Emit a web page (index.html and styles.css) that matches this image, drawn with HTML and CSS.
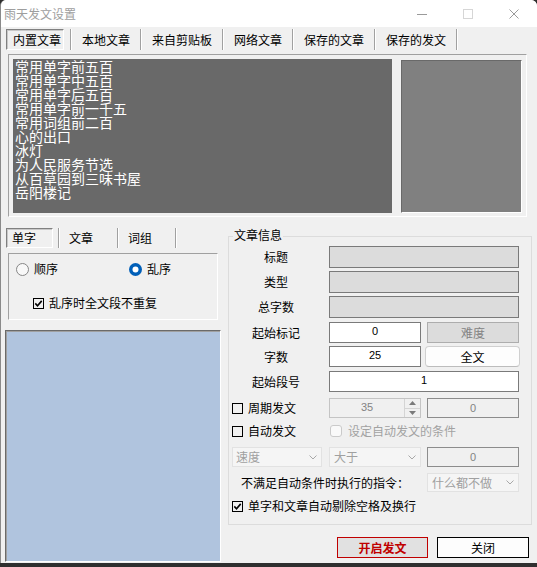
FILE: index.html
```html
<!DOCTYPE html>
<html lang="zh-CN">
<head>
<meta charset="utf-8">
<title>雨天发文设置</title>
<link rel="stylesheet" href="styles.css">
</head>
<body>
<div class="window">
  <div class="titlebar">
    <span class="title">雨天发文设置</span>
    <div class="caption-btns">
      <span class="cb"><svg width="10" height="10" viewBox="0 0 10 10"><path d="M0 5.5h10" stroke="#9a9a9a" stroke-width="1"/></svg></span>
      <span class="cb"><svg width="10" height="10" viewBox="0 0 10 10"><rect x="0.5" y="0.5" width="9" height="9" fill="none" stroke="#d6d6d6"/></svg></span>
      <span class="cb"><svg width="10" height="10" viewBox="0 0 10 10"><path d="M0.5 0.5l9 9M9.5 0.5l-9 9" stroke="#9a9a9a" stroke-width="1"/></svg></span>
    </div>
  </div>

  <div class="tabs">
    <span class="tab-sel">内置文章</span>
    <span class="sep"></span>
    <span class="tab">本地文章</span>
    <span class="sep"></span>
    <span class="tab">来自剪贴板</span>
    <span class="sep"></span>
    <span class="tab">网络文章</span>
    <span class="sep"></span>
    <span class="tab">保存的文章</span>
    <span class="sep"></span>
    <span class="tab">保存的发文</span>
    <span class="sep"></span>
  </div>

  <div class="toppanel">
    <div class="list">
      <div>常用单字前五百</div>
      <div>常用单字中五百</div>
      <div>常用单字后五百</div>
      <div>常用单字前一千五</div>
      <div>常用词组前二百</div>
      <div>心的出口</div>
      <div>冰灯</div>
      <div>为人民服务节选</div>
      <div>从百草园到三味书屋</div>
      <div>岳阳楼记</div>
    </div>
    <div class="preview"></div>
  </div>

  <div class="lower">
    <div class="leftcol">
      <div class="tabs2">
        <span class="tab2-sel">单字</span>
        <span class="sep"></span>
        <span class="tab2">文章</span>
        <span class="sep"></span>
        <span class="tab2 w56">词组</span>
        <span class="sep"></span>
      </div>
      <div class="radiogroup">
        <div class="rrow">
          <span class="radio r-first">
            <svg width="13" height="13" viewBox="0 0 13 13"><circle cx="6.5" cy="6.5" r="6" fill="#f8f8f8" stroke="#868686"/></svg>
            <span>顺序</span>
          </span>
          <span class="radio r-second">
            <svg width="13" height="13" viewBox="0 0 13 13"><circle cx="6.5" cy="6.5" r="6.5" fill="#005fb8"/><circle cx="6.5" cy="6.5" r="3" fill="#fff"/></svg>
            <span>乱序</span>
          </span>
        </div>
        <div class="crow">
          <span class="chk">
            <svg width="11" height="11" viewBox="0 0 11 11"><rect x="0.5" y="0.5" width="10" height="10" fill="none" stroke="#000"/><path d="M2.3 5.4l2.2 2.3 4.2-4.8" fill="none" stroke="#000" stroke-width="1.6"/></svg>
            <span>乱序时全文段不重复</span>
          </span>
        </div>
      </div>
      <div class="bluebox"></div>
    </div>

    <div class="rightcol">
      <div class="group">
        <div class="gcap">文章信息</div>
        <div class="row r1"><span class="lbl">标题</span><span class="field ro wide"></span></div>
        <div class="row r2"><span class="lbl">类型</span><span class="field ro wide"></span></div>
        <div class="row r3"><span class="lbl">总字数</span><span class="field ro wide"></span></div>
        <div class="row r4"><span class="lbl">起始标记</span><span class="field edit half">0</span><span class="btn-dis">难度</span></div>
        <div class="row r5"><span class="lbl">字数</span><span class="field edit half">25</span><span class="btn11">全文</span></div>
        <div class="row r6"><span class="lbl">起始段号</span><span class="field edit wide">1</span></div>
        <div class="row r7">
          <span class="chk lblcol">
            <svg width="11" height="11" viewBox="0 0 11 11"><rect x="0.5" y="0.5" width="10" height="10" fill="none" stroke="#000"/></svg>
            <span>周期发文</span>
          </span>
          <span class="spin">
            <span class="spin-val">35</span>
            <span class="spin-btns">
              <span class="sb"><svg width="7" height="4" viewBox="0 0 7 4"><path d="M0 4L3.5 0 7 4z" fill="#7a7a7a"/></svg></span>
              <span class="sb sb-down"><svg width="7" height="4" viewBox="0 0 7 4"><path d="M0 0L3.5 4 7 0z" fill="#7a7a7a"/></svg></span>
            </span>
          </span>
          <span class="dis0">0</span>
        </div>
        <div class="row r8">
          <span class="chk lblcol">
            <svg width="11" height="11" viewBox="0 0 11 11"><rect x="0.5" y="0.5" width="10" height="10" fill="none" stroke="#000"/></svg>
            <span>自动发文</span>
          </span>
          <span class="chk-dis">
            <svg width="12" height="12" viewBox="0 0 12 12"><rect x="0.5" y="0.5" width="11" height="11" rx="2.5" fill="#f9f9f9" stroke="#cacaca"/></svg>
            <span>设定自动发文的条件</span>
          </span>
        </div>
        <div class="row r9">
          <span class="combo c-speed"><span>速度</span><svg width="8" height="5" viewBox="0 0 8 5"><path d="M0.5 0.5l3.5 3.5 3.5-3.5" fill="none" stroke="#a8a8a8"/></svg></span>
          <span class="combo c-gt"><span>大于</span><svg width="8" height="5" viewBox="0 0 8 5"><path d="M0.5 0.5l3.5 3.5 3.5-3.5" fill="none" stroke="#a8a8a8"/></svg></span>
          <span class="dis0">0</span>
        </div>
        <div class="row r10">
          <span class="cmdlbl">不满足自动条件时执行的指令：</span>
          <span class="combo c-cmd"><span>什么都不做</span><svg width="8" height="5" viewBox="0 0 8 5"><path d="M0.5 0.5l3.5 3.5 3.5-3.5" fill="none" stroke="#a8a8a8"/></svg></span>
        </div>
        <div class="row r11">
          <span class="chk">
            <svg width="11" height="11" viewBox="0 0 11 11"><rect x="0.5" y="0.5" width="10" height="10" fill="none" stroke="#000"/><path d="M2.3 5.4l2.2 2.3 4.2-4.8" fill="none" stroke="#000" stroke-width="1.6"/></svg>
            <span>单字和文章自动剔除空格及换行</span>
          </span>
        </div>
      </div>
      <div class="btnrow">
        <span class="btn btn-start">开启发文</span>
        <span class="btn btn-close">关闭</span>
      </div>
    </div>
  </div>
</div>
</body>
</html>
```

FILE: styles.css
```css
html, body {
  margin: 0;
  padding: 0;
}
body {
  background: #2f2f2f;
  font-family: "Noto Sans CJK SC", "Microsoft YaHei", sans-serif;
  font-size: 12px;
  line-height: 14px;
  color: #000;
}
.window {
  width: 537px;
  height: 563px;
  box-sizing: border-box;
  border-left: 1px solid #8a8a8a;
  background: #f0f0f0;
  border-radius: 6px 6px 0 0;
  overflow: hidden;
}

/* title bar */
.titlebar {
  height: 27px;
  background: #ffffff;
  display: flex;
  align-items: center;
}
.title {
  padding-left: 3px;
  color: #9e9e9e;
}
.caption-btns {
  margin-left: auto;
  display: flex;
  align-self: stretch;
}
.cb {
  width: 46px;
  display: flex;
  align-items: center;
  justify-content: center;
}
.cb svg { display: block; }

/* top tabs */
.tabs {
  margin-top: 2px;
  height: 21px;
  display: flex;
}
.tab {
  padding: 0 10px;
  line-height: 21px;
}
.tab-sel {
  margin-left: 5px;
  margin-right: 6px;
  width: 58px;
  box-sizing: border-box;
  padding-left: 6px;
  line-height: 19px;
  border: 1px solid;
  border-color: #808080 #ffffff #ffffff #808080;
  box-shadow: inset 1px 1px 0 #c8c8c8;
}
.sep {
  width: 1px;
  background: #a0a0a0;
  border-right: 1px solid #ffffff;
}

/* list panel */
.toppanel {
  margin: 4px 0 0 7px;
  width: 519px;
  height: 163px;
  box-sizing: border-box;
  border: 1px solid;
  border-color: #a0a0a0 #ffffff #ffffff #a0a0a0;
  padding: 4px 0 0 4px;
  display: flex;
  gap: 9px;
}
.list {
  width: 379px;
  height: 154px;
  box-sizing: border-box;
  background: #696969;
  color: #ffffff;
  font-size: 14px;
  line-height: 14px;
  padding: 0 2px;
}
.preview {
  margin-top: 1px;
  width: 121px;
  height: 153px;
  box-sizing: border-box;
  background: #808080;
  border: 1px solid;
  border-color: #696969 #ffffff #ffffff #696969;
}

/* lower area */
.lower {
  display: flex;
}
.leftcol {
  margin-left: 4px;
  width: 216px;
}
.tabs2 {
  margin-top: 11px;
  height: 20px;
  display: flex;
}
.tab2-sel {
  margin-left: 1px;
  margin-right: 5px;
  width: 47px;
  box-sizing: border-box;
  padding-left: 5px;
  line-height: 18px;
  border: 1px solid;
  border-color: #808080 #ffffff #ffffff #808080;
  box-shadow: inset 1px 1px 0 #c8c8c8;
}
.tab2 {
  width: 57px;
  box-sizing: border-box;
  padding-left: 9px;
  line-height: 20px;
}
.tab2.w56 { width: 56px; }

.radiogroup {
  margin: 5px 0 0 3px;
  width: 210px;
  height: 67px;
  box-sizing: border-box;
  border: 1px solid;
  border-color: #a0a0a0 #ffffff #ffffff #a0a0a0;
  padding-left: 7px;
}
.rrow {
  margin-top: 7px;
  height: 16px;
  display: flex;
  align-items: center;
}
.radio {
  display: flex;
  align-items: center;
}
.radio svg { display: block; }
.r-first { width: 113px; gap: 5px; }
.r-second { gap: 5px; }
.crow {
  margin-top: 18px;
  height: 16px;
  padding-left: 17px;
  display: flex;
  align-items: center;
}
.chk {
  display: flex;
  align-items: center;
  gap: 5px;
}
.chk svg { display: block; flex: none; }

.bluebox {
  margin-top: 10px;
  height: 232px;
  box-sizing: border-box;
  background: #b0c4de;
  border: 1px solid;
  border-color: #6a6a6a #ffffff #ffffff #6a6a6a;
  box-shadow: inset 1px 1px 0 #a0a0a0;
}

/* right column */
.rightcol {
  margin-left: 7px;
  width: 304px;
}
.group {
  margin-top: 19px;
  border: 1px solid #dcdcdc;
  padding: 0 0 8px 3px;
}
.gcap {
  margin: -9px 0 0 1px;
  padding: 0 1px;
  width: max-content;
  height: 14px;
  line-height: 14px;
  background: #f0f0f0;
}
.row {
  display: flex;
  align-items: stretch;
}
.r1 { margin-top: 4px; height: 22px; }
.r2 { margin-top: 3px; height: 22px; }
.r3 { margin-top: 3px; height: 22px; }
.r4 { margin-top: 4px; height: 21px; }
.r5 { margin-top: 3px; height: 21px; }
.r6 { margin-top: 4px; height: 21px; }
.r7 { margin-top: 6px; height: 20px; }
.r8 { margin-top: 3px; height: 20px; }
.r9 { margin-top: 6px; height: 20px; }
.r10 { margin-top: 6px; height: 19px; }
.r11 { margin-top: 4px; height: 20px; }

.lbl {
  width: 88px;
  margin-right: 9px;
  display: flex;
  align-items: center;
  justify-content: center;
}
.field {
  box-sizing: border-box;
  border: 1px solid #7a7a7a;
}
.ro { background: #dcdcdc; }
.wide { width: 190px; }
.half { width: 92px; }
.edit {
  background: #ffffff;
  font-family: "Liberation Sans", Arial, sans-serif;
  font-size: 11px;
  line-height: 14px;
  padding-top: 1px;
  text-align: center;
}
.btn-dis {
  margin-left: 6px;
  width: 92px;
  box-sizing: border-box;
  border: 1px solid #adadad;
  background: #dcdcdc;
  color: #838383;
  display: flex;
  align-items: center;
  justify-content: center;
}
.btn11 {
  margin-left: 4px;
  width: 95px;
  box-sizing: border-box;
  border: 1px solid #d0d0d0;
  border-bottom-color: #bcbcbc;
  border-radius: 4px;
  background: #fdfdfd;
  display: flex;
  align-items: center;
  justify-content: center;
}
.lblcol { width: 97px; }

.spin {
  width: 92px;
  box-sizing: border-box;
  border: 1px solid #c4c4c4;
  background: #f0f0f0;
  display: flex;
}
.spin-val {
  flex: 1;
  text-align: center;
  color: #838383;
  font-family: "Liberation Sans", Arial, sans-serif;
  font-size: 11px;
  line-height: 16px;
}
.spin-btns {
  width: 15px;
  border-left: 1px solid #d4d4d4;
  display: flex;
  flex-direction: column;
}
.sb {
  flex: 1;
  display: flex;
  align-items: center;
  justify-content: center;
}
.sb svg { display: block; }
.sb-down { border-top: 1px solid #d4d4d4; }
.dis0 {
  margin-left: 6px;
  width: 92px;
  box-sizing: border-box;
  border: 1px solid #8c8c8c;
  background: #f0f0f0;
  color: #838383;
  font-family: "Liberation Sans", Arial, sans-serif;
  font-size: 11px;
  line-height: 18px;
  text-align: center;
}
.chk-dis {
  margin-left: 1px;
  display: flex;
  align-items: center;
  gap: 6px;
  color: #a2a2a2;
}
.chk-dis svg { display: block; }

.combo {
  box-sizing: border-box;
  border: 1px solid #e2e2e2;
  background: #f5f5f5;
  color: #a0a0a0;
  display: flex;
  align-items: center;
  justify-content: space-between;
  padding: 0 4px 0 3px;
}
.combo svg { display: block; }
.c-speed { width: 90px; margin-right: 7px; }
.c-gt { width: 92px; padding-left: 4px; }
.c-cmd { width: 92px; padding-left: 4px; }
.cmdlbl {
  margin-left: 9px;
  width: 186px;
  display: flex;
  align-items: center;
}

.btnrow {
  margin-top: 12px;
  height: 21px;
  display: flex;
  justify-content: flex-end;
  gap: 9px;
  padding-right: 3px;
}
.btn {
  box-sizing: border-box;
  display: flex;
  align-items: center;
  justify-content: center;
}
.btn-start {
  width: 91px;
  border: 1px solid #c00000;
  background: #e1e1e1;
  color: #c00000;
  font-weight: bold;
}
.btn-close {
  width: 92px;
  border: 1px solid #000000;
  background: #fdfdfd;
}
```
